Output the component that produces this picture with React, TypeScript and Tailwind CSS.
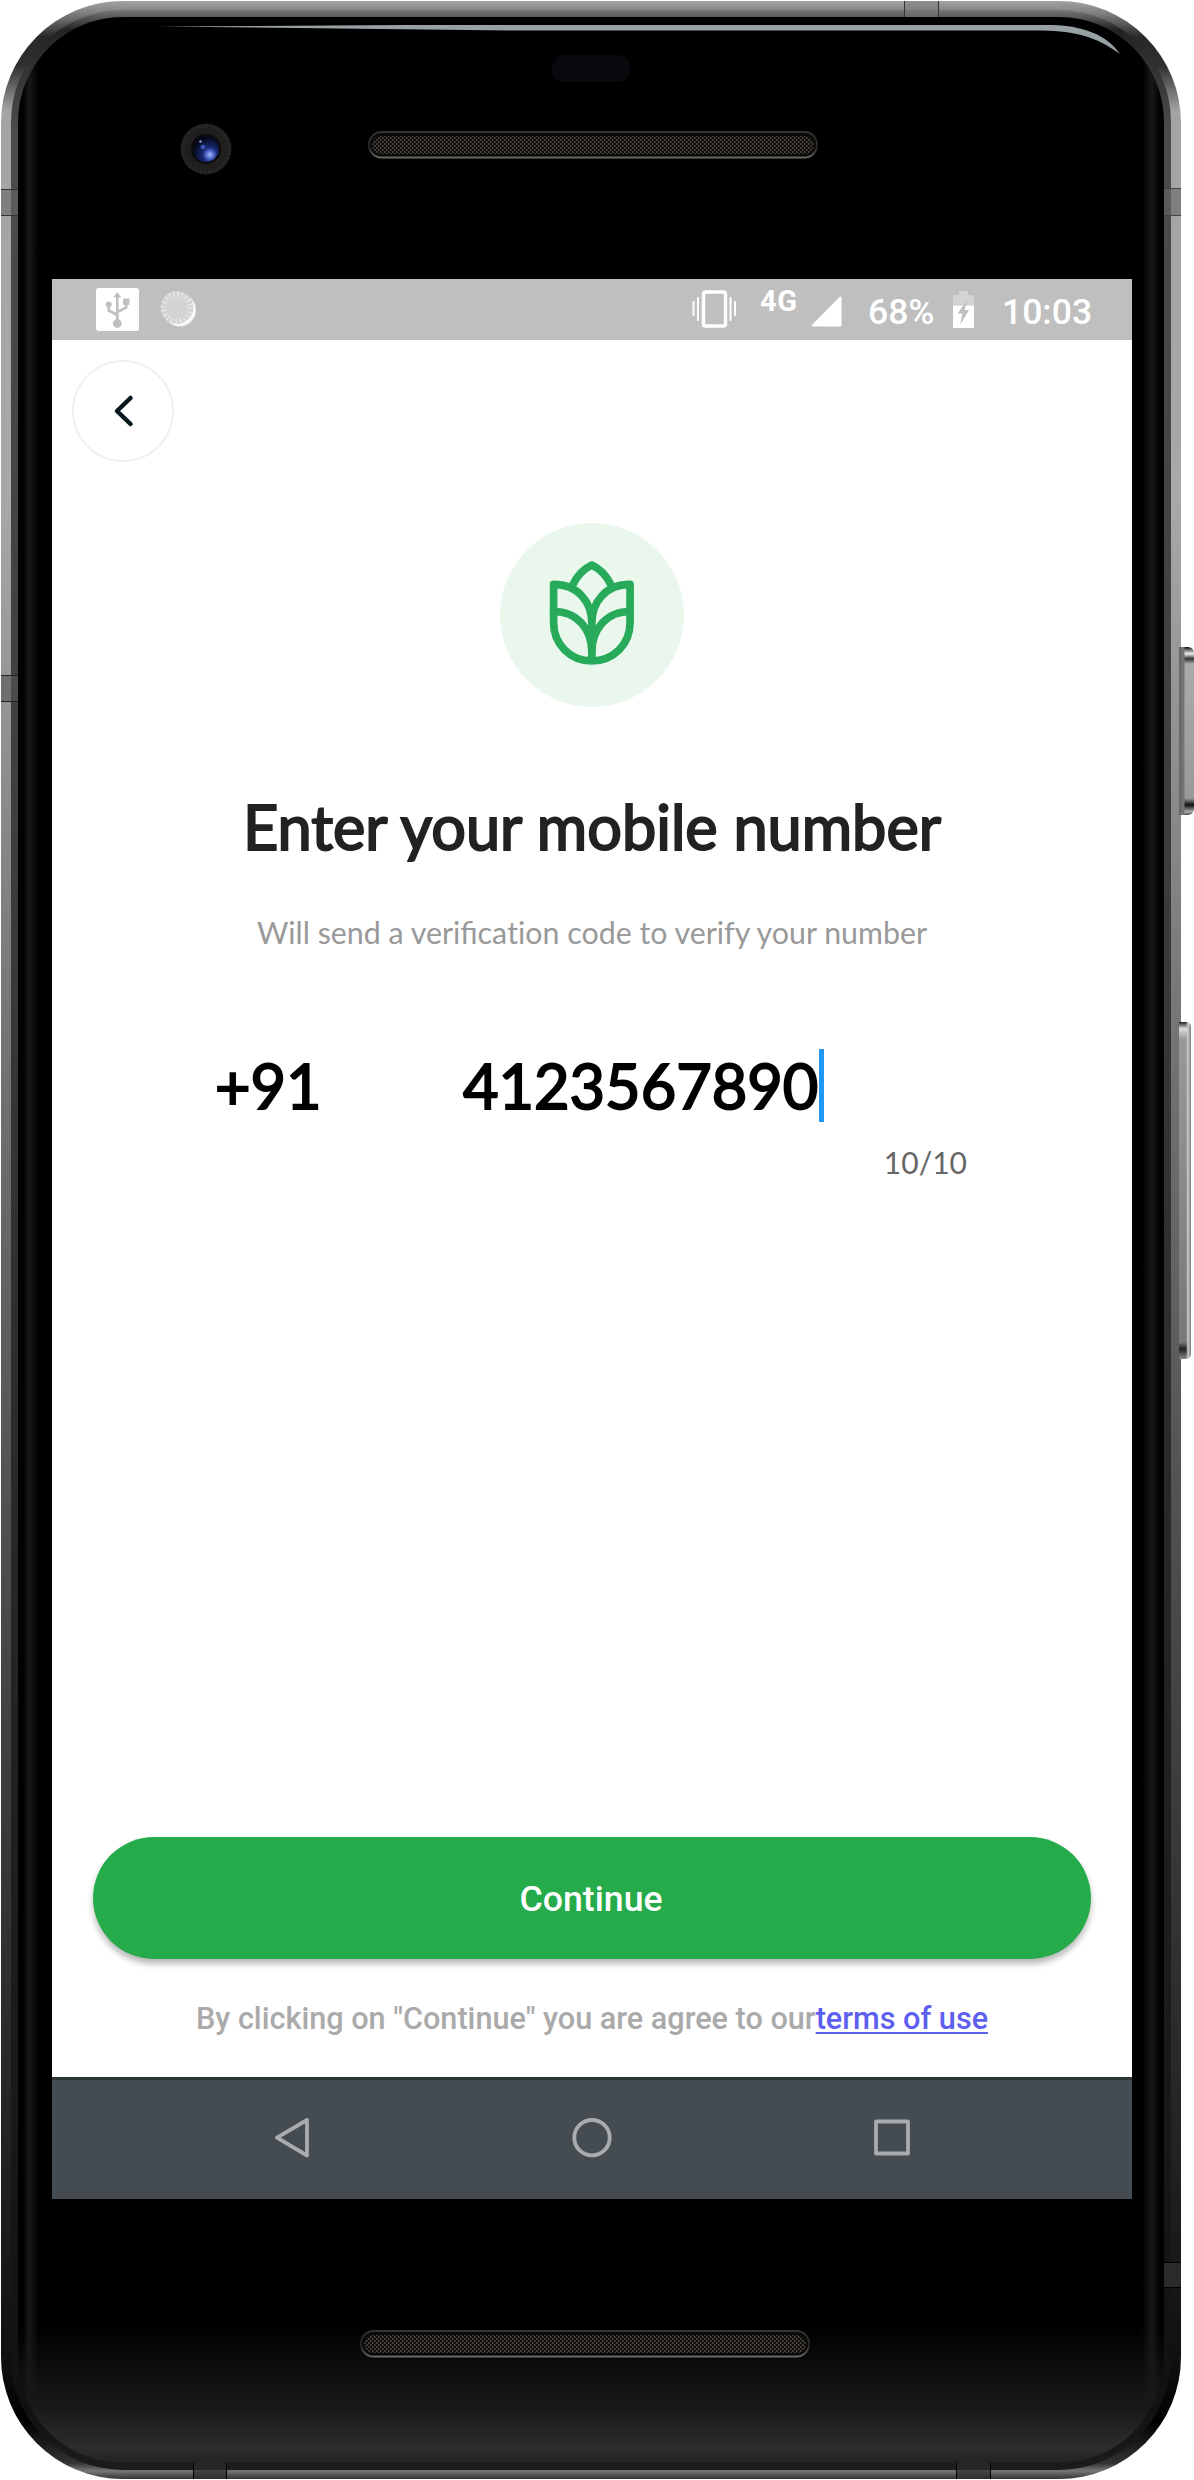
import React from "react";

function Grille({ id }: { id: string }) {
  return (
    <svg className="block h-[28px] w-[450px]" viewBox="0 0 450 28" fill="none">
      <defs>
        <pattern id={id} width="4" height="4" patternUnits="userSpaceOnUse">
          <rect width="4" height="4" fill="#0d0c0b" />
          <rect x="0" y="0" width="1.6" height="2" fill="#4a433b" />
          <rect x="2" y="2" width="1.6" height="2" fill="#4a433b" />
        </pattern>
        <linearGradient id={id + "-rim"} x1="0" y1="0" x2="0" y2="1">
          <stop offset="0" stopColor="#333333" />
          <stop offset="0.6" stopColor="#222222" />
          <stop offset="1" stopColor="#6c6763" />
        </linearGradient>
      </defs>
      <rect x="1" y="1" width="448" height="25.500" rx="12.500" fill="#090909" stroke={`url(#${id}-rim)`} strokeWidth="2" />
      <rect x="4" y="5" width="442" height="18" rx="9" fill={`url(#${id})`} />
    </svg>
  );
}

function Camera() {
  return (
    <svg className="block size-[52px]" viewBox="0 0 52 52">
      <defs>
        <radialGradient id="lens" cx="0.65" cy="0.72" r="0.65">
          <stop offset="0" stopColor="#a9bdf5" />
          <stop offset="0.2" stopColor="#5a74d8" />
          <stop offset="0.42" stopColor="#1a2a78" />
          <stop offset="1" stopColor="#050818" />
        </radialGradient>
      </defs>
      <circle cx="26" cy="26" r="25.500" fill="#211e1e" />
      <circle cx="26" cy="26" r="23" fill="none" stroke="#2b2828" strokeWidth="3" strokeDasharray="2 2" />
      <circle cx="26" cy="26" r="15" fill="#0a0a0c" />
      <circle cx="26" cy="26" r="13" fill="url(#lens)" />
      <circle cx="23" cy="24" r="2.300" fill="#3c56bb" />
      <circle cx="20.500" cy="18.500" r="1.200" fill="#8d9de0" />
    </svg>
  );
}

function StatusBar() {
  return (
    <div className="flex h-[61px] shrink-0 items-start bg-[#bfbfbf] text-white">
      <svg className="ml-[44px] mt-[9px] block size-[43px]" viewBox="0 0 43 43" fill="none">
        <rect width="43" height="43" rx="3" fill="#fff" />
        <g stroke="#bfbfbf" strokeWidth="2.600">
          <path d="M21.300 8V34M12.700 17V22.500L21.300 27M30.300 14V19.500L21.300 24" />
        </g>
        <path d="M21.300 4L25.300 9.500H17.300Z" fill="#bfbfbf" />
        <circle cx="21.300" cy="35.500" r="4.400" fill="#bfbfbf" />
        <circle cx="12.700" cy="16.300" r="2.900" fill="#bfbfbf" />
        <rect x="27" y="10.500" width="6.400" height="6.400" fill="#bfbfbf" />
      </svg>
      <svg className="ml-[21px] mt-[11px] block size-[38px]" viewBox="0 0 38 38">
        <circle cx="20" cy="20.500" r="16.300" fill="#dcdcdc" />
        <circle cx="19" cy="19.500" r="16.300" fill="#ffffff" />
        <circle cx="17" cy="17.500" r="16.500" fill="#d4d4d4" />
        <circle cx="17" cy="17.500" r="13.500" fill="none" stroke="#e8e8e8" strokeWidth="5" strokeDasharray="1.400 2.840" />
      </svg>
      <svg className="ml-[494px] mt-[10px] block h-[40px] w-[46px]" viewBox="0 0 46 40" fill="none" stroke="#fff">
        <rect x="11.500" y="3" width="22" height="34" rx="2" strokeWidth="3.500" />
        <path d="M1.500 13V26M6 9V31M38.500 9V31M43 13V26" strokeWidth="2" strokeLinecap="round" />
      </svg>
      <span className="ml-[22px] mt-[6px] block w-[38px] whitespace-nowrap text-[29px] font-bold leading-[33px] tracking-[0.500px]">4G</span>
      <svg className="ml-[13px] mt-[17px] block h-[31px] w-[31px]" viewBox="0 0 31 31">
        <path d="M29 0.500Q30.500 0 30.500 2V29Q30.500 30.500 29 30.500H2Q0 30.500 1 29Z" fill="#fff" />
      </svg>
      <span className="ml-[26px] mt-[12px] block w-[66px] whitespace-nowrap text-[35.500px] font-medium leading-[42px]">68%</span>
      <svg className="ml-[19px] mt-[12px] block h-[37px] w-[21px]" viewBox="0 0 21 37">
        <path d="M0 4H6V0H15V4H21V14.500H0Z" fill="#d3d3d3" />
        <path d="M0 14.500H21V37H0Z" fill="#fff" />
        <path d="M14 9.500L4.500 22.500H9.500L7 34L16 19H11.500Z" fill="#bfbfbf" />
      </svg>
      <span className="ml-[28px] mt-[12px] block whitespace-nowrap text-[35.500px] font-medium leading-[42px]">10:03</span>
    </div>
  );
}

function PlantLogo() {
  return (
    <div className="flex size-[184px] shrink-0 items-center justify-center rounded-full bg-[#e9f7ed]">
      <svg className="block size-[184px]" viewBox="61 70 551 551" fill="none" stroke="#27ab5b" strokeWidth="23" strokeLinejoin="round" strokeLinecap="round">
        <path d="M221.500 254V368C221.500 434 272 483 336 483C400 483 450.500 434 450.500 368V254C378 254 336 306 336 370V483V370C336 306 294 254 221.500 254Z" />
        <path d="M221.500 335C292 335 336 388 336 456C336 388 380 335 450.500 335" />
        <path d="M279 255C290 232 311 208 336 196C361 208 382 232 393 255" />
      </svg>
    </div>
  );
}

function Screen() {
  return (
    <div className="ml-[34px] flex h-[1920px] w-[1080px] shrink-0 flex-col bg-white font-['Roboto',sans-serif]">
      <StatusBar />
      <button className="ml-[20px] mt-[20px] flex size-[102px] shrink-0 items-center justify-center rounded-full border-2 border-[#f0f0f4]">
        <svg className="block size-[40px]" viewBox="0 0 40 40" fill="none" stroke="#06181d" strokeWidth="4.500" strokeLinecap="round" strokeLinejoin="round">
          <path d="M27.500 7L14 20L27.500 33" />
        </svg>
      </button>
      <div className="mt-[61px] flex flex-col items-center font-['Lato',sans-serif]">
        <PlantLogo />
        <h1 className="mt-[81px] whitespace-nowrap text-[61.250px] font-normal leading-[78px] text-[#222222] [-webkit-text-stroke:2px_#222222]">Enter your mobile number</h1>
        <p className="mt-[47px] whitespace-nowrap text-[30.350px] leading-[38px] text-[#999999]">
          Will send a verifica<span className="[font-variant-ligatures:none]">t</span>ion code to verify your number
        </p>
      </div>
      <div className="mt-[98px] flex h-[73px] shrink-0 items-center font-['Lato',sans-serif] text-[61.250px] font-normal leading-[73px] text-black [-webkit-text-stroke:2px_#000000]">
        <span className="ml-[163px] block w-[248px]">+91</span>
        <span className="block">4123567890</span>
        <span className="ml-px block h-[73px] w-[5px] bg-[#2196f3]" />
      </div>
      <div className="mt-[22px] pr-[165px] text-right font-['Lato',sans-serif] text-[30px] leading-[36px] text-[#666666]">10/10</div>
      <button className="mx-auto mt-auto flex h-[122px] w-[998px] shrink-0 items-center justify-center rounded-full bg-[#25ab4a] pr-[2px] pt-[3px] text-[35.700px] font-medium text-white shadow-[0_5px_6px_rgba(0,0,0,0.28)]">Continue</button>
      <p className="mt-[41px] flex h-[77px] shrink-0 justify-center whitespace-nowrap text-[30.620px] font-medium leading-[38px] text-[#aaaaaa]">
        By clicking on "Continue" you are agree to our<a className="text-[#5d5fef] underline decoration-2 underline-offset-[3px]">terms of use</a>
      </p>
      <div className="flex h-[122px] shrink-0 items-center justify-center border-t-[3px] border-[#2b3638] bg-[#454c51] pb-[3px]">
        <svg className="block h-[44px] w-[640px]" viewBox="0 0 640 44" fill="none" stroke="#a9acae" strokeWidth="3.800" strokeLinejoin="round">
          <path d="M35 4V39.500L5 21.700Z" />
          <circle cx="320" cy="21.700" r="17.700" />
          <rect x="604" y="5.500" width="32" height="32" />
        </svg>
      </div>
    </div>
  );
}

export default function App() {
  return (
    <div className="relative h-[2480px] w-[1194px] overflow-hidden bg-white pt-px">
      {/* side keys */}
      <div className="absolute left-[1179px] top-[647px] h-[168px] w-[15px] rounded-r-[6px] bg-[linear-gradient(90deg,#666_0px,#777_5px,transparent_6px),linear-gradient(180deg,#111_0%,#eee_4%,#333_7%,#aaa_10%,#999_90%,#111_94%,#aaa_98%,#555_100%)]" />
      <div className="absolute left-[1179px] top-[1022px] h-[337px] w-[12px] rounded-r-[5px] bg-[linear-gradient(90deg,transparent_7px,#ccc_9px,#777_12px),linear-gradient(180deg,#222_0%,#ddd_2%,#999_5%,#777_95%,#222_97%,#888_100%)]" />

      {/* metal body */}
      <div className="ml-px h-[2478px] w-[1180px] overflow-hidden rounded-[122px] bg-[linear-gradient(180deg,#a2a2a2_0px,#808080_12px,#282828_36px,#303030_65px,#a4a4a4_110px,#a8a8a8_500px,#777777_1000px,#4a4a4a_1600px,#222_2150px,#101010_2360px,#000_2420px,#333_2462px,#777_2470px,#333_2478px)] px-[10px] pb-[9px] pt-[9px]">
        <div className="h-full rounded-[112px] bg-[linear-gradient(180deg,#777_0px,#222_20px,#4c4c4c_120px,#3b3b3b_900px,#222_1700px,#111_2400px,#1c1c1c_2460px)] p-[7px]">
          <div className="flex h-full flex-col overflow-hidden rounded-[105px] bg-[linear-gradient(90deg,transparent_5px,#181818_11px,transparent_20px,transparent_1124px,#181818_1134px,transparent_1142px),linear-gradient(180deg,#000_2310px,#191919_2390px,#2d2d2d_2432px,#222_2446px)]">
            <div className="flex h-[262px] shrink-0 flex-col">
              <div className="mx-auto mt-[38px] h-[27px] w-[78px] shrink-0 rounded-[12px] bg-[#08090d]" />
              <div className="mt-[41px] flex items-start">
                <div className="ml-[162px]"><Camera /></div>
                <div className="ml-[136px] mt-[8px]"><Grille id="earpiece" /></div>
              </div>
            </div>
            <Screen />
            <div className="ml-[342px] mt-[131px]"><Grille id="speaker" /></div>
          </div>
        </div>
      </div>

      {/* glass reflection along the top edge */}
      <svg className="absolute left-[158px] top-[24px] block h-[34px] w-[964px]" viewBox="0 0 964 34">
        <path d="M0 2.500L250 1H890C925 1 949 11 962 30C939 13 917 7 885 6.500H360Z" fill="#98a2a4" />
      </svg>

      {/* antenna bands */}
      <div className="absolute left-px top-[189px] h-[27px] w-[17px] border-y border-[#333] bg-[#666]/60" />
      <div className="absolute left-px top-[675px] h-[27px] w-[17px] border-y border-[#222] bg-[#555]/60" />
      <div className="absolute left-[1164px] top-[188px] h-[28px] w-[17px] border-y border-[#444] bg-[#666]/60" />
      <div className="absolute left-[1164px] top-[2262px] h-[26px] w-[17px] border-y border-black bg-[#2a2a2a]" />
      <div className="absolute left-[904px] top-px h-[16px] w-[35px] border-x border-[#333] bg-[#777]/50" />
      <div className="absolute left-[193px] top-[2463px] h-[16px] w-[34px] border-x border-black bg-[#2c2c2c]/70" />
      <div className="absolute left-[956px] top-[2463px] h-[16px] w-[35px] border-x border-black bg-[#2c2c2c]/70" />
    </div>
  );
}
